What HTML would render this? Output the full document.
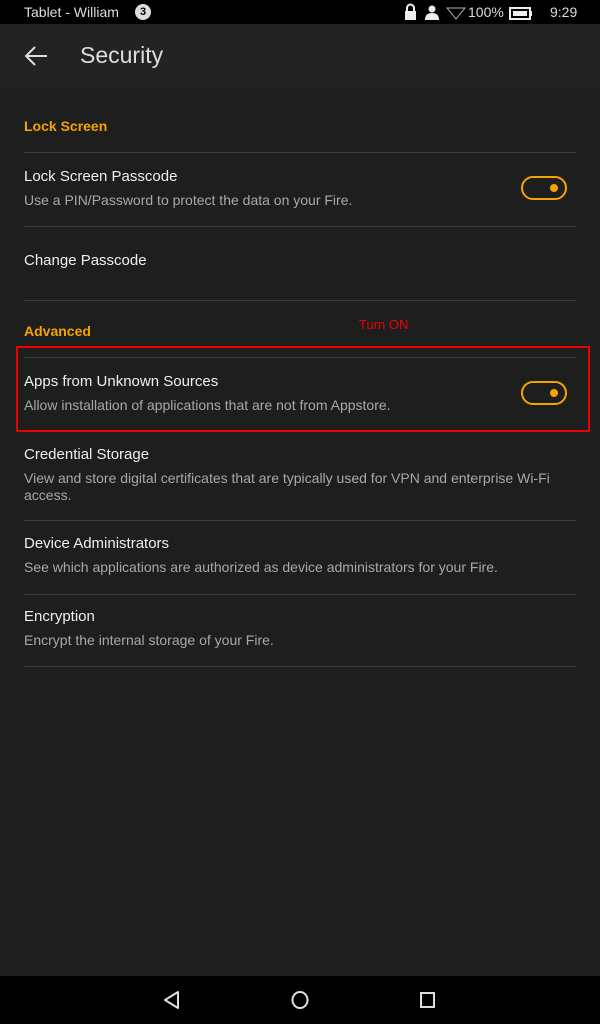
<!DOCTYPE html>
<html><head><meta charset="utf-8"><style>
*{margin:0;padding:0;box-sizing:border-box}
body{width:600px;height:1024px;background:#1e1e1e;font-family:"Liberation Sans",sans-serif;position:relative;overflow:hidden;color:#eee}
.a{position:absolute;white-space:nowrap}
.t{font-size:15px;color:#eee;left:24px}
.s{font-size:14px;color:#a8a8a8;left:24px}
.h{font-size:14px;font-weight:bold;color:#f5a300;left:24px}
.d{position:absolute;left:24px;width:552px;height:1px;background:#3a3a3a}
.tg{position:absolute;left:521px;width:46px;height:24px;border:2px solid #f5a300;border-radius:12px}
.tg:after{content:"";position:absolute;right:7px;top:6px;width:8px;height:8px;border-radius:50%;background:#f5a300}
</style></head><body>
<div class="a" style="left:0;top:0;width:600px;height:24px;background:#000"></div>
<div class="a" style="left:24px;top:4px;font-size:14px;color:#ddd">Tablet - William</div>
<div class="a" style="left:135px;top:4px;width:16px;height:16px;border-radius:50%;background:#ddd;color:#000;font-size:11px;font-weight:bold;text-align:center;line-height:16px">3</div>
<svg class="a" style="left:404px;top:3px" width="140" height="18" viewBox="0 0 140 18">
<rect x="1" y="8" width="11" height="9" fill="#eee"/><path d="M3 8V5a3.5 3.5 0 0 1 7 0v3" stroke="#eee" stroke-width="2" fill="none"/>
<circle cx="28" cy="6" r="3.5" fill="#eee"/><path d="M21 17q0-7 7-7t7 7z" fill="#eee"/>
<path d="M43 5h18l-9 11z" stroke="#aaa" fill="none"/>
<rect x="106" y="5" width="20" height="11" stroke="#eee" stroke-width="2" fill="none"/><rect x="126" y="8" width="2" height="5" fill="#eee"/><rect x="109" y="8" width="14" height="5" fill="#eee"/>
</svg>
<div class="a" style="left:468px;top:4px;font-size:14px;color:#ddd">100%</div>
<div class="a" style="left:550px;top:4px;font-size:14px;color:#ddd">9:29</div>
<div class="a" style="left:0;top:24px;width:600px;height:64px;background:#232323"></div>
<svg class="a" style="left:24px;top:45px" width="24" height="22"><path d="M23 11H2M11 2L2 11l9 9" stroke="#ddd" stroke-width="2" fill="none"/></svg>
<div class="a" style="left:80px;top:42px;font-size:23px;color:#ddd">Security</div>
<div class="a h" style="top:118px">Lock Screen</div>
<div class="d" style="top:152px"></div>
<div class="a t" style="top:168px">Lock Screen Passcode</div>
<div class="a s" style="top:192px">Use a PIN/Password to protect the data on your Fire.</div>
<div class="tg" style="top:176px"></div>
<div class="d" style="top:226px"></div>
<div class="a t" style="top:252px">Change Passcode</div>
<div class="d" style="top:300px"></div>
<div class="a h" style="top:323px">Advanced</div>
<div class="a" style="left:359px;top:317px;font-size:13px;color:#e00">Turn ON</div>
<div class="d" style="top:357px"></div>
<div class="a t" style="top:373px">Apps from Unknown Sources</div>
<div class="a s" style="top:397px">Allow installation of applications that are not from Appstore.</div>
<div class="tg" style="top:381px"></div>
<div class="a" style="left:16px;top:346px;width:574px;height:86px;border:2px solid #e00"></div>
<div class="a t" style="top:446px">Credential Storage</div>
<div class="a s" style="top:470px">View and store digital certificates that are typically used for VPN and enterprise Wi-Fi</div>
<div class="a s" style="top:487px">access.</div>
<div class="d" style="top:520px"></div>
<div class="a t" style="top:535px">Device Administrators</div>
<div class="a s" style="top:559px">See which applications are authorized as device administrators for your Fire.</div>
<div class="d" style="top:594px"></div>
<div class="a t" style="top:608px">Encryption</div>
<div class="a s" style="top:632px">Encrypt the internal storage of your Fire.</div>
<div class="d" style="top:666px"></div>
<div class="a" style="left:0;top:976px;width:600px;height:48px;background:#000"></div>
<svg class="a" style="left:0;top:976px" width="600" height="48">
<path d="M178 16L165 24l13 8z" stroke="#ddd" stroke-width="2" fill="none" stroke-linejoin="round"/>
<ellipse cx="300" cy="24" rx="7.5" ry="8" stroke="#ddd" stroke-width="2" fill="none"/>
<rect x="421" y="17" width="13" height="14" stroke="#ddd" stroke-width="2" fill="none"/>
</svg>
</body></html>
